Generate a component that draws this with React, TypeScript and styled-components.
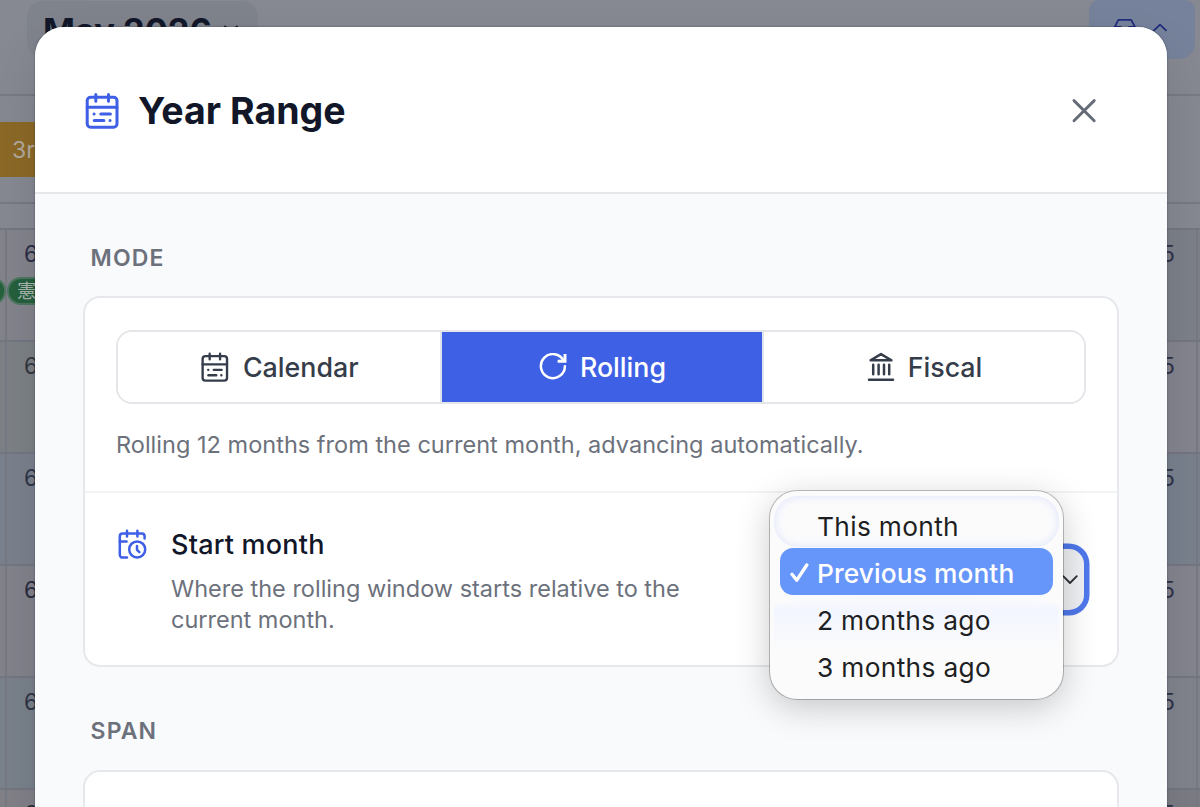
import React from 'react';
import styled, { createGlobalStyle } from 'styled-components';

const GlobalStyle = createGlobalStyle`
  *, *::before, *::after { box-sizing: border-box; }
  body {
    margin: 0;
    font-family: Inter, 'Noto Sans CJK JP', sans-serif;
    -webkit-font-smoothing: antialiased;
  }
`;

const Screen = styled.div`
  position: relative;
  width: 1200px;
  height: 807px;
  overflow: hidden;
  background: #868991;
`;

/* ---- dimmed calendar page ---- */

const TopBar = styled.header`
  display: flex;
  justify-content: space-between;
  align-items: flex-start;
  height: 96px;
  padding: 0 5px 0 27px;
  border-bottom: 2px solid #777a83;
`;

const MonthButton = styled.div`
  display: flex;
  align-items: center;
  gap: 11px;
  width: 231px;
  height: 57px;
  margin-top: 1px;
  padding: 1px 0 0 16px;
  border-radius: 16px;
  background: #7f838c;
  color: #12172a;
  font-size: 34.3px;
  font-weight: 700;
  line-height: 57px;
  white-space: nowrap;
`;

const TrayButton = styled.div`
  display: flex;
  justify-content: space-between;
  width: 106px;
  height: 59px;
  padding: 17px 28px 0 24px;
  border-radius: 10px 10px 16px 16px;
  background: #76829b;
  color: #202c7c;
`;

const EventStrip = styled.div`
  display: flex;
  align-items: center;
  height: 108px;
  border-bottom: 2px solid #777a83;
`;

const EventBar = styled.div`
  width: 120px;
  height: 55px;
  padding-left: 12px;
  background: #8c6926;
  color: #b3aa9d;
  font-size: 23px;
  line-height: 56px;
`;

const WeekdayRow = styled.div`
  height: 24px;
`;

const MonthRow = styled.div<{ $left: string; $right: string }>`
  display: flex;
  justify-content: space-between;
  height: 112px;
  border-top: 2px solid #747781;
  background: linear-gradient(90deg, ${p => p.$left} 50%, ${p => p.$right} 50%);
`;

const DayCell = styled.div<{ $end?: boolean; $ink: string }>`
  width: ${p => (p.$end ? '60px' : '100px')};
  margin: ${p => (p.$end ? '0 2px 0 0' : '0 0 0 5px')};
  padding: ${p => (p.$end ? '11px 21px 0 0' : '11px 0 0 17px')};
  border-left: ${p => (p.$end ? '0' : '2px solid #777983')};
  border-right: ${p => (p.$end ? '2px solid #777983' : '0')};
  text-align: ${p => (p.$end ? 'right' : 'left')};
  color: ${p => p.$ink};
  font-size: 22.5px;
  line-height: 26px;
`;

const Holiday = styled.div`
  width: 130px;
  height: 28px;
  margin: 10px 0 0 -17px;
  padding-left: 8px;
  border: 2px solid #4c765f;
  border-radius: 14px;
  background: #26603d;
  color: #a8b5ad;
  font-family: 'Noto Sans CJK JP', sans-serif;
  font-size: 19.5px;
  line-height: 22px;
  white-space: nowrap;
`;

const HolidayEnd = styled.span`
  position: absolute;
  left: -24px;
  top: 277px;
  width: 30px;
  height: 28px;
  border: 2px solid #4c765f;
  border-radius: 14px;
  background: #26603d;
`;

/* ---- dialog ---- */

const Dialog = styled.section`
  position: absolute;
  left: 35px;
  top: 27px;
  width: 1132px;
  height: 820px;
  border-radius: 29px;
  background: #f8fafc;
  box-shadow: 0 0 2px rgba(20, 24, 40, 0.5), 0 24px 50px rgba(10, 14, 30, 0.12);
`;

const DialogHeader = styled.header`
  display: flex;
  align-items: center;
  height: 167px;
  padding: 2px 69px 0 49px;
  border-bottom: 2px solid #e5e7eb;
  border-radius: 29px 29px 0 0;
  background: #fff;
`;

const HeaderIcon = styled.span`
  display: flex;
  color: #3f5fe6;
`;

const Title = styled.h1`
  flex: 1;
  margin: 1px 0 0 18px;
  color: #111728;
  font-size: 37.5px;
  font-weight: 700;
  line-height: 46px;
`;

const CloseIcon = styled.svg`
  color: #656c78;
`;

const Body = styled.div`
  padding: 0 48px;
`;

const SectionLabel = styled.h2<{ $last?: boolean }>`
  margin: 0;
  padding: 49px 0 ${p => (p.$last ? '24px' : '23px')} 7.6px;
  color: #6c717c;
  font-size: 23px;
  font-weight: 600;
  line-height: 30px;
  letter-spacing: 1.1px;
`;

const Card = styled.div<{ $height: number }>`
  height: ${p => p.$height}px;
  border: 2px solid #e6e8ec;
  border-radius: 17px;
  background: #fff;
`;

const ModeBlock = styled.div`
  height: 195px;
  padding: 32px 31px 0;
  border-bottom: 2px solid #f2f3f5;
`;

const Segments = styled.div`
  display: grid;
  grid-template-columns: repeat(3, 1fr);
  height: 74px;
  border: 2px solid #e4e6ea;
  border-radius: 16px;
  overflow: hidden;
`;

const Segment = styled.div<{ $active?: boolean }>`
  display: flex;
  align-items: center;
  justify-content: center;
  gap: 13px;
  padding-left: 1px;
  background: ${p => (p.$active ? '#3e60e4' : '#fff')};
  color: ${p => (p.$active ? '#fff' : '#353c4a')};
  font-size: 26.8px;
  font-weight: 500;
  line-height: 36px;

  & + & {
    border-left: 2px solid #e1e4ec;
  }
`;

const Hint = styled.p`
  margin: 0;
  color: #6c717c;
  font-size: 23.5px;
  line-height: 31px;
`;

const ModeHint = styled(Hint)`
  padding-top: 25px;
  letter-spacing: 0.02px;
`;

const SettingRow = styled.div`
  display: flex;
  align-items: flex-start;
  height: 172px;
  padding: 36px 33px 0 32px;
`;

const BlueIcon = styled.span`
  display: flex;
  margin-top: -1px;
  color: #3f5fe6;
`;

const SettingText = styled.div`
  width: 540px;
  margin-left: 22px;
`;

const SettingName = styled.div`
  margin: -1px 0 11px;
  color: #111728;
  font-size: 27px;
  font-weight: 500;
  line-height: 34px;
  letter-spacing: 0.2px;
`;

const SelectBox = styled.div`
  display: flex;
  align-items: center;
  justify-content: flex-end;
  width: 300px;
  height: 61px;
  margin: 20px 0 0 auto;
  padding-right: 6px;
  border-radius: 15px;
  background: #f0f1f4;
  box-shadow: 0 0 0 5.5px #4f78ec;
  color: #2c2f36;
`;

const Menu = styled.ul`
  position: absolute;
  left: 770px;
  top: 491px;
  width: 293px;
  height: 208px;
  margin: 0;
  padding: 10px;
  border-radius: 27px;
  background: #fbfbfc;
  box-shadow: 0 0 0 1px rgba(0, 0, 0, 0.24), 0 8px 34px rgba(0, 0, 0, 0.21);
  list-style: none;

  &::before,
  &::after {
    content: '';
    position: absolute;
    left: 4px;
    right: 4px;
  }
  &::before {
    top: 5px;
    height: 51px;
    border-radius: 24px;
    box-shadow: inset 0 0 10px rgba(105, 135, 250, 0.2);
  }
  &::after {
    top: 104px;
    height: 56px;
    border-radius: 50% 50% 0 0 / 12px 12px 0 0;
    background: linear-gradient(rgba(246, 248, 255, 0), #f3f6ff 30%, rgba(250, 251, 255, 0));
  }
`;

const Option = styled.li<{ $selected?: boolean }>`
  position: relative;
  z-index: 1;
  display: flex;
  align-items: center;
  height: 47.2px;
  padding: 3px 0 0 10px;
  border-radius: 13px;
  background: ${p => (p.$selected ? '#6796fa' : 'transparent')};
  color: ${p => (p.$selected ? '#fff' : '#1e1f23')};
  font-size: 26.3px;
  font-weight: ${p => (p.$selected ? 500 : 400)};
  letter-spacing: ${p => (p.$selected ? '0.1px' : '0.33px')};
  white-space: nowrap;
`;

const CheckSlot = styled.span`
  display: flex;
  width: 27px;
`;

/* ---- icons ---- */

const CalendarIcon = ({ width, stroke }: { width: number; stroke: number }) => (
  <svg width={width} height={(width * 40) / 36} viewBox="0 0 36 40" fill="none" stroke="currentColor" strokeWidth={stroke} strokeLinecap="round">
    <rect x="3.2" y="6.2" width="29.8" height="30" rx="3.4" />
    <path d="M11.8 3.4v6.8M24.5 3.4v6.8M3.2 16.3H33" />
    <path d="M10 23h.1M16.8 23h9.6M10.2 29.6h9.7M26 29.6h.1" />
  </svg>
);

const RollingIcon = () => (
  <svg width="28" height="28" viewBox="0 0 28 28" fill="none" stroke="currentColor" strokeWidth="2.5" strokeLinecap="round" strokeLinejoin="round">
    <path d="M25.9 13.2A12 12 0 1 1 24.7 7.9" />
    <path d="M26 1v7.2h-7.4" strokeLinecap="butt" strokeLinejoin="miter" strokeWidth="3" />
  </svg>
);

const BankIcon = () => (
  <svg width="28" height="30" viewBox="0 0 28 30" fill="none" stroke="currentColor" strokeWidth="2.5" strokeLinecap="round" strokeLinejoin="round">
    <path d="M2 27.7h24" />
    <path d="M6.2 12.7v9.6M11.6 12.7v9.6M17 12.7v9.6M22.2 12.7v9.6" />
    <path d="M14 2.1l10.4 6.2H3.6z" />
  </svg>
);

const CalendarClockIcon = () => (
  <svg width="32" height="32" viewBox="0 0 32 32" fill="none" stroke="currentColor" strokeWidth="2.5" strokeLinecap="round" strokeLinejoin="round">
    <path d="M10 29.6H5.6a2.8 2.8 0 0 1-2.8-2.8V8.2a2.8 2.8 0 0 1 2.8-2.8h19.2a2.8 2.8 0 0 1 2.8 2.8v2.4" />
    <path d="M10 2.8v5.6M20.4 2.8v5.6M2.8 13.6h6.8" />
    <circle cx="20.2" cy="21.4" r="8" />
    <path d="M20 18v3.8l2.4 2.4" />
  </svg>
);

const rows = [
  ['#84848d', '#7d8189', '#2b2e47'],
  ['#7d8286', '#84858e', '#34373f'],
  ['#7b828d', '#7a828e', '#303548'],
  ['#83838c', '#84858e', '#2a2c3c'],
  ['#7a828b', '#82848d', '#303443'],
  ['#828188', '#7c7d84', '#2a2c3c'],
];

export default function App() {
  return (
    <>
      <GlobalStyle />
      <Screen>
        <TopBar>
          <MonthButton>
            May 2026
            <svg width="16" height="10" viewBox="0 0 16 10" fill="none" stroke="currentColor" strokeWidth="1.8" strokeLinecap="round">
              <path d="M2 1.5l6 6 6-6" />
            </svg>
          </MonthButton>
          <TrayButton>
            <svg width="24" height="24" viewBox="0 0 24 24" fill="none" stroke="currentColor" strokeWidth="1.8" strokeLinejoin="round">
              <path d="M1.6 10.2L5.4 2.8h12.8l3.9 7.4v10H1.6zM1.6 9.8h6l2 3h4.6l2-3h5.9" />
            </svg>
            <svg width="16" height="18" viewBox="0 0 16 18" fill="none" stroke="currentColor" strokeWidth="1.8" strokeLinecap="round" strokeLinejoin="round">
              <path d="M3 13.3l6-5.7 6 5.7" />
            </svg>
          </TrayButton>
        </TopBar>
        <EventStrip>
          <EventBar>3rd</EventBar>
        </EventStrip>
        <WeekdayRow />
        {rows.map(([left, right, ink], i) => (
          <MonthRow key={i} $left={left} $right={right}>
            <DayCell $ink={ink}>
              6
              {i === 0 && <Holiday>憲法記念日</Holiday>}
            </DayCell>
            <DayCell $end $ink="#303347">5</DayCell>
          </MonthRow>
        ))}
        <HolidayEnd />

        <Dialog>
          <DialogHeader>
            <HeaderIcon><CalendarIcon width={36} stroke={3} /></HeaderIcon>
            <Title>Year Range</Title>
            <CloseIcon width="28" height="28" viewBox="0 0 28 28" fill="none" stroke="currentColor" strokeWidth="2.9" strokeLinecap="round">
              <path d="M4 3.6l20.2 20.2M24.2 3.6L4 23.8" />
            </CloseIcon>
          </DialogHeader>
          <Body>
            <SectionLabel>MODE</SectionLabel>
            <Card $height={371}>
              <ModeBlock>
                <Segments>
                  <Segment><CalendarIcon width={29.5} stroke={2.9} />Calendar</Segment>
                  <Segment $active><RollingIcon />Rolling</Segment>
                  <Segment><BankIcon />Fiscal</Segment>
                </Segments>
                <ModeHint>Rolling 12 months from the current month, advancing automatically.</ModeHint>
              </ModeBlock>
              <SettingRow>
                <BlueIcon><CalendarClockIcon /></BlueIcon>
                <SettingText>
                  <SettingName>Start month</SettingName>
                  <Hint>Where the rolling window starts relative to the current month.</Hint>
                </SettingText>
                <SelectBox>
                  <svg width="16" height="10" viewBox="0 0 16 10" fill="none" stroke="currentColor" strokeWidth="1.8" strokeLinecap="round" strokeLinejoin="round">
                    <path d="M1.2 1.2L8 8l6.8-6.8" />
                  </svg>
                </SelectBox>
              </SettingRow>
            </Card>
            <SectionLabel $last>SPAN</SectionLabel>
            <Card $height={160} />
          </Body>
        </Dialog>

        <Menu>
          <Option><CheckSlot />This month</Option>
          <Option $selected>
            <CheckSlot>
              <svg width="20" height="20" viewBox="0 0 20 20" fill="none" stroke="currentColor" strokeWidth="3.3" strokeLinecap="round" strokeLinejoin="round">
                <path d="M2 11.2l4.8 6L16.8 2" />
              </svg>
            </CheckSlot>
            Previous month
          </Option>
          <Option><CheckSlot />2 months ago</Option>
          <Option><CheckSlot />3 months ago</Option>
        </Menu>
      </Screen>
    </>
  );
}
